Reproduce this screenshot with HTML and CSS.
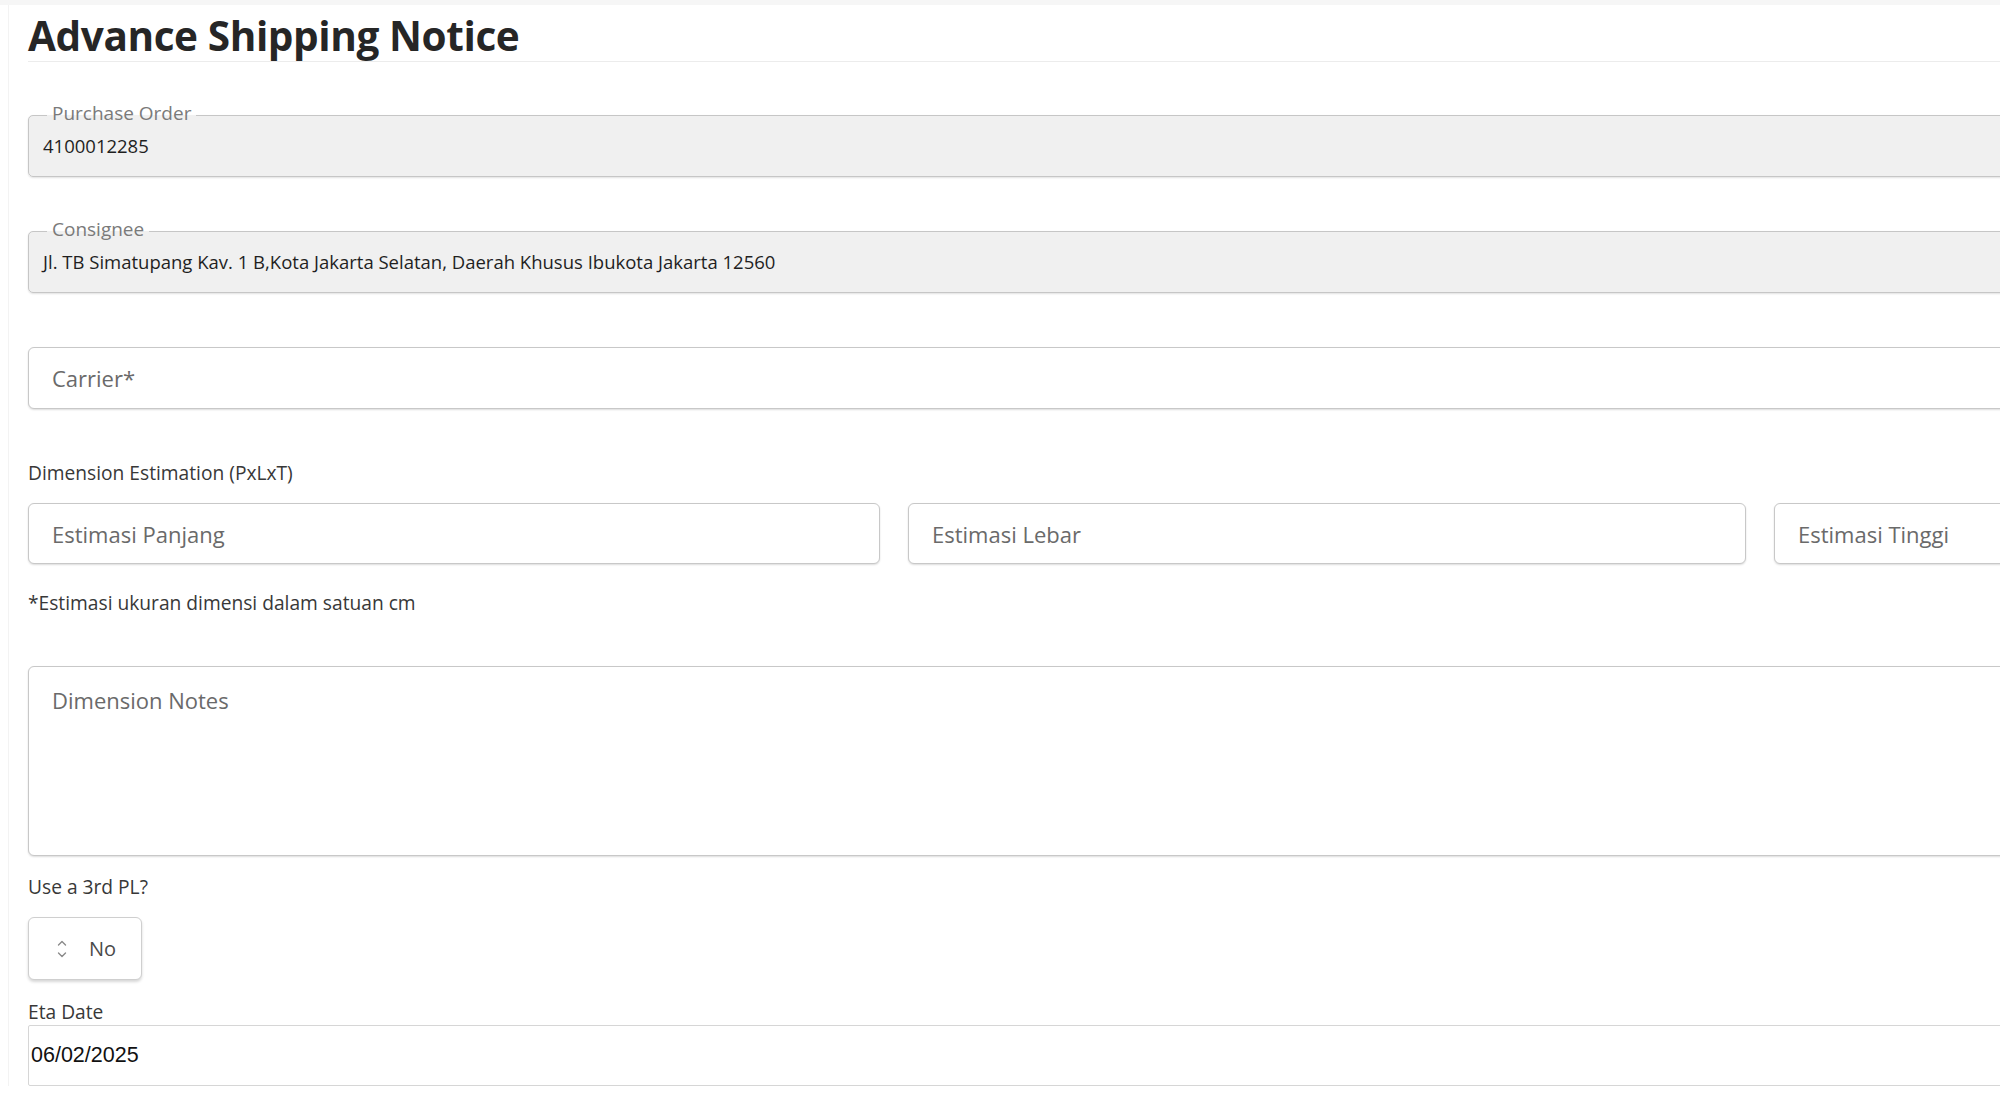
FILE: index.html
```html
<!DOCTYPE html>
<html lang="en">
<head>
<meta charset="utf-8">
<title>Advance Shipping Notice</title>
<link rel="stylesheet" href="styles.css">
</head>
<body>
<div class="topstrip"></div>
<main class="page">
  <h1 class="title">Advance Shipping Notice</h1>

  <fieldset class="ro ro-first">
    <legend>Purchase Order</legend>
    <div class="ro-value">4100012285</div>
  </fieldset>

  <fieldset class="ro ro-next">
    <legend>Consignee</legend>
    <div class="ro-value">Jl. TB Simatupang Kav. 1 B,Kota Jakarta Selatan, Daerah Khusus Ibukota Jakarta 12560</div>
  </fieldset>

  <input class="field carrier" type="text" placeholder="Carrier*">

  <div class="label dim-label">Dimension Estimation (PxLxT)</div>
  <div class="dims">
    <input class="field" type="text" placeholder="Estimasi Panjang">
    <input class="field" type="text" placeholder="Estimasi Lebar">
    <input class="field" type="text" placeholder="Estimasi Tinggi">
  </div>
  <div class="label hint">*Estimasi ukuran dimensi dalam satuan cm</div>

  <textarea class="field notes" placeholder="Dimension Notes"></textarea>

  <div class="label pl-label">Use a 3rd PL?</div>
  <div class="select" role="button">
    <svg class="chev" width="12" height="22" viewBox="0 0 12 22" aria-hidden="true">
      <path d="M2.5 7 L6 3.5 L9.5 7" fill="none" stroke="#8a8a8a" stroke-width="1.4" stroke-linecap="round" stroke-linejoin="round"/>
      <path d="M2.5 15 L6 18.5 L9.5 15" fill="none" stroke="#8a8a8a" stroke-width="1.4" stroke-linecap="round" stroke-linejoin="round"/>
    </svg>
    <span class="select-text">No</span>
  </div>

  <div class="label eta-label">Eta Date</div>
  <input class="date" type="text" value="06/02/2025">
</main>
</body>
</html>
```

FILE: styles.css
```css
html, body {
  margin: 0;
  padding: 0;
  overflow: hidden;
  background: #ffffff;
}

body {
  font-family: "Open Sans", "Noto Sans", sans-serif;
  color: #333333;
}

.topstrip {
  height: 5px;
  background: #f6f6f6;
}

.page {
  width: 2600px;
  margin-left: 8px;
  padding-left: 19px;
  border-left: 1px solid #f3f3f3;
  display: flex;
  flex-direction: column;
  align-items: stretch;
}

.title {
  margin: 8px 0 0 0;
  padding-bottom: 3px;
  font-size: 40.5px;
  line-height: 45px;
  font-weight: 700;
  color: #262626;
  border-bottom: 1px solid #ececec;
  letter-spacing: -0.4px;
}

/* read-only outlined fields with notched label */
.ro {
  margin: 0;
  min-width: 0;
  padding: 6px 14px 18px 14px;
  border: 1px solid #c6c6c6;
  border-radius: 5px;
  background: #f0f0f0;
  box-shadow: 0 1px 2px rgba(0, 0, 0, 0.12);
}

.ro-first {
  margin-top: 40px;
}

.ro-next {
  margin-top: 41px;
}

.ro legend {
  margin-left: 4px;
  padding: 0 5px 4px 5px;
  font-size: 19px;
  line-height: 22px;
  color: #7a7a7a;
}

.ro-value {
  font-size: 18.5px;
  line-height: 24px;
  color: #1f1f1f;
}

/* editable fields */
.field {
  box-sizing: border-box;
  display: block;
  width: 100%;
  height: 61px;
  margin: 0;
  padding: 0 23px;
  border: 1px solid #c8c8c8;
  border-radius: 6px;
  background: #ffffff;
  box-shadow: 0 1px 2px rgba(0, 0, 0, 0.14);
  font-family: "Open Sans", "Noto Sans", sans-serif;
  font-size: 22px;
  color: #333333;
  outline: none;
}

.field::placeholder {
  color: #6a6a6a;
  opacity: 1;
}

.carrier {
  margin-top: 54px;
  height: 62px;
}

.label {
  font-size: 19.2px;
  line-height: 24px;
  color: #383838;
}

.dim-label {
  margin-top: 52px;
}

.dims {
  margin-top: 18px;
  display: grid;
  grid-template-columns: 852px 838px 852px;
  column-gap: 28px;
}

.hint {
  margin-top: 27px;
}

.notes {
  margin-top: 51px;
  height: 190px;
  padding-top: 21px;
  line-height: 24px;
  resize: none;
}

.pl-label {
  margin-top: 19px;
}

.select {
  margin-top: 18px;
  box-sizing: border-box;
  width: 114px;
  height: 63px;
  border: 1px solid #cfcfcf;
  border-radius: 6px;
  background: #ffffff;
  box-shadow: 0 2px 3px rgba(0, 0, 0, 0.16);
  display: flex;
  align-items: center;
  padding-left: 27px;
  gap: 21px;
}

.chev {
  display: block;
  flex: none;
}

.select-text {
  font-size: 20px;
  line-height: 24px;
  color: #4a4a4a;
}

.eta-label {
  margin-top: 20px;
}

.date {
  box-sizing: border-box;
  display: block;
  width: 100%;
  height: 61px;
  margin: 1px 0 0 0;
  padding: 0 2px;
  border: 1px solid #d6d6d6;
  border-radius: 2px;
  background: #ffffff;
  font-family: "Liberation Sans", Arial, sans-serif;
  font-size: 21.5px;
  color: #111111;
  outline: none;
}
```
